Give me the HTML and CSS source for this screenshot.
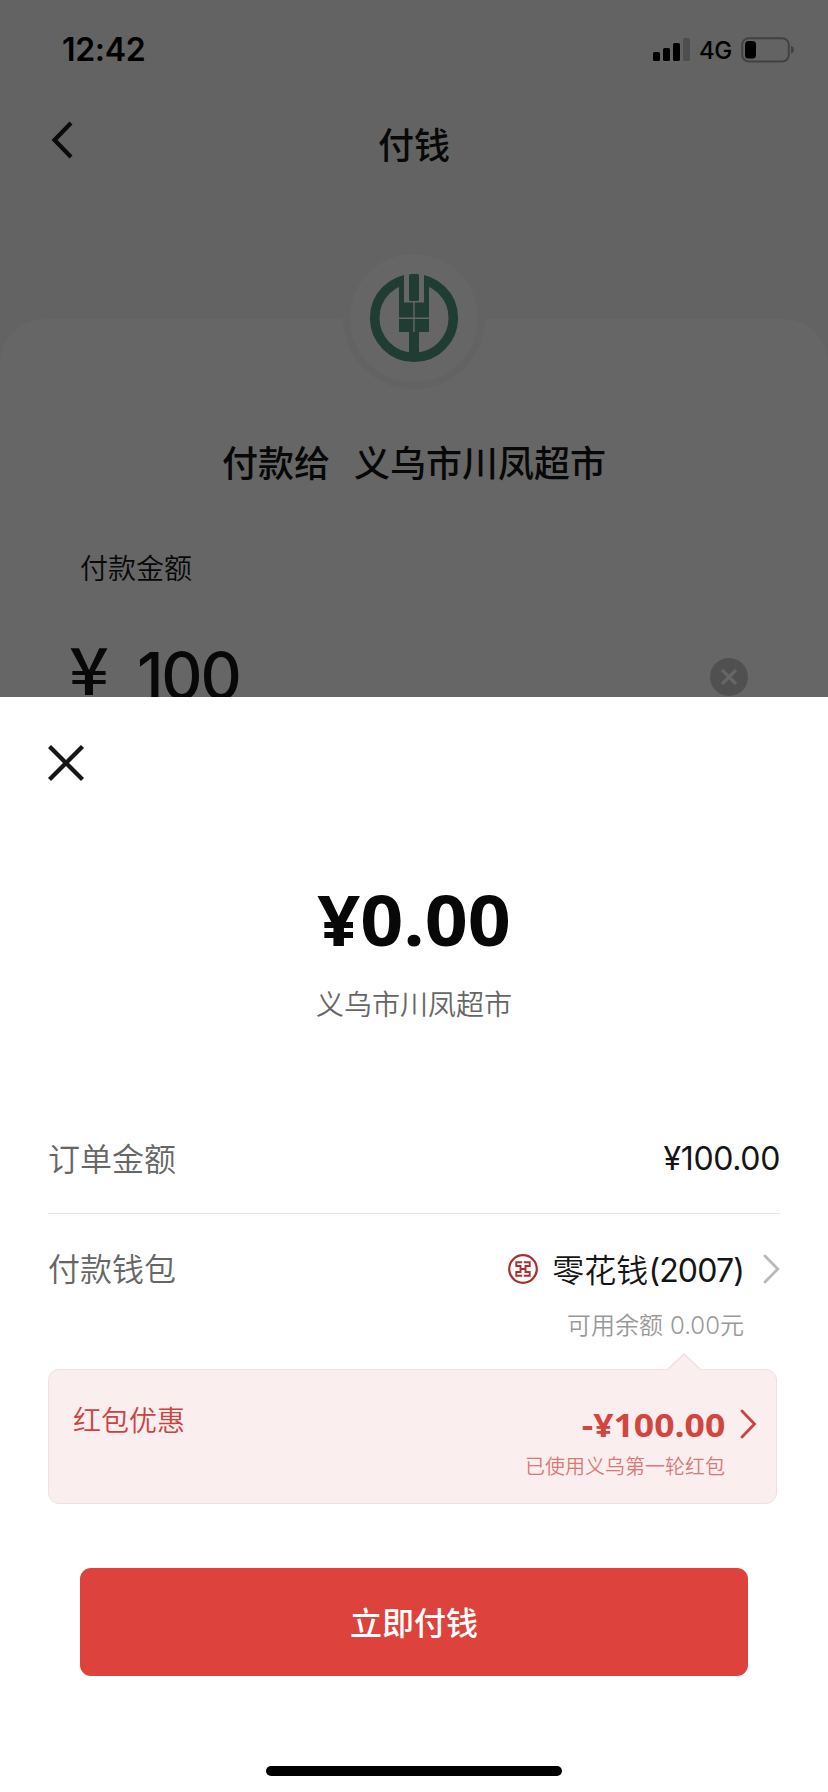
FILE: index.html
```html
<!DOCTYPE html>
<html lang="zh-CN">
<head>
<meta charset="utf-8">
<title>付钱</title>
<link rel="stylesheet" href="styles.css">
</head>
<body>
<div class="screen">
  <main class="page">
    <div class="status">
      <span class="time">12:42</span>
      <svg class="signal" width="38" height="24" viewBox="0 0 38 24">
        <rect x="0" y="14" width="7" height="9" rx="1.6"/>
        <rect x="10" y="10" width="7" height="13" rx="1.6"/>
        <rect x="20" y="5" width="7" height="18" rx="1.6"/>
        <rect x="30" y="0" width="7" height="23" rx="1.6" fill="#4e4e4e"/>
      </svg>
      <span class="net">4G</span>
      <svg class="battery" width="54" height="26" viewBox="0 0 54 26">
        <rect x="1.2" y="1.2" width="46.6" height="23.2" rx="6.5" fill="none" stroke="#424242" stroke-width="2"/>
        <rect x="4" y="4" width="11" height="17.6" rx="3.5"/>
        <path d="M50 8.8Q53 10 53 12.8Q53 15.600 50 16.800Z" fill="#424242"/>
      </svg>
    </div>
    <header class="nav">
      <svg class="back" width="24" height="38" viewBox="0 0 24 38"><path d="M20 2L3.500 19L20 36" fill="none" stroke="#0a0a0a" stroke-width="4.200"/></svg>
      <h1 class="title">付钱</h1>
    </header>
    <section class="card">
      <div class="logo">
        <svg width="90" height="90" viewBox="0 0 90 90">
          <circle cx="45" cy="45" r="39.300" fill="none" stroke="#213d33" stroke-width="9.600"/>
          <path d="M35 0H55V20H35Z" fill="#666"/>
          <path d="M30 5V59H40V84H50V59H60V5L55 2.200V29.500H35V2.200Z" fill="#213d33"/>
          <path d="M35 0H55V29H35Z" fill="#666"/>
          <rect x="40" y="1" width="10" height="27" rx="1.500" fill="#213d33"/>
          <path d="M45 29V59M30 45.300H60" stroke="#666" stroke-width="1.400"/>
        </svg>
      </div>
      <h2 class="payee"><span>付款给</span><span>义乌市川凤超市</span></h2>
      <p class="label">付款金额</p>
      <div class="amount">
        <span class="yen">¥</span><span class="digits">100</span>
        <svg class="clear" width="38" height="38" viewBox="0 0 38 38"><circle cx="19" cy="19" r="19" fill="#505050"/><path d="M12 12L26 26M26 12L12 26" stroke="#666" stroke-width="3.200"/></svg>
      </div>
    </section>
  </main>
  <section class="sheet">
    <svg class="close" width="38" height="38" viewBox="0 0 38 38"><path d="M1.500 1.500L34.500 34.500M34.500 1.500L1.500 34.500" stroke="#161616" stroke-width="4.300"/></svg>
    <div class="total">¥0.00</div>
    <div class="shop">义乌市川凤超市</div>
    <div class="row order"><span class="key">订单金额</span><span class="price">¥100.00</span></div>
    <div class="row wallet">
      <span class="key">付款钱包</span>
      <svg class="bank" width="30" height="30" viewBox="0 0 30 30" fill="none" stroke="#a9302f">
        <circle cx="15" cy="15" r="13.800" stroke-width="2.200"/>
        <path d="M14.200 8.300H8.300V12H12.500V18H8.300V21.700H14.200M15.800 8.300H21.700V12H17.500V18H21.700V21.700H15.800M12.500 15H17.500" stroke-width="1.900"/>
      </svg>
      <span class="name">零花钱<span class="tail">(2007)</span></span>
      <svg class="go" width="17" height="30" viewBox="0 0 17 30"><path d="M2 2L14.800 15L2 28" fill="none" stroke="#b9b9b9" stroke-width="2.800" stroke-linecap="round"/></svg>
    </div>
    <div class="balance">可用余额<span class="num">0.00</span>元</div>
    <div class="coupon">
      <svg class="tip" width="34" height="18" viewBox="0 0 34 18"><path d="M1 16L17 1L33 16V18H1Z" fill="#fbeeee"/><path d="M1 16L17 1L33 16" fill="none" stroke="#f1dfe1" stroke-width="1.500"/></svg>
      <span class="coupon-key">红包优惠</span>
      <div class="coupon-val">
        <strong class="off">-¥100.00</strong>
        <span class="used">已使用义乌第一轮红包</span>
      </div>
      <svg class="coupon-go" width="17" height="30" viewBox="0 0 17 30"><path d="M2 2L14.500 15L2 28" fill="none" stroke="#c9443f" stroke-width="2.800" stroke-linecap="round"/></svg>
    </div>
    <button class="pay">立即付钱</button>
    <div class="home"></div>
  </section>
</div>
</body>
</html>
```
FILE: styles.css
```css
* { box-sizing: border-box; margin: 0; padding: 0; }
body { width: 828px; height: 1792px; overflow: hidden; font-family: "Noto Sans CJK SC", sans-serif; }
.screen { display: flex; flex-direction: column; width: 828px; height: 1792px; background: #fff; }
.page { height: 697px; overflow: hidden; background: #636363; color: #080808; }
.status { display: flex; align-items: center; height: 100px; padding: 0 33px 0 62px; font-family: Inter, sans-serif; color: #000; }
.time { margin-right: auto; font-size: 32px; font-weight: 600; line-height: 40px; letter-spacing: -0.3px; }
.signal { margin-right: 8px; }
.net { width: 35px; margin-right: 7px; font-size: 24px; font-weight: 450; letter-spacing: -0.5px; }
.nav { display: flex; align-items: center; height: 90px; }
.back { margin: -10px 0 0 51px; }
.title { flex: 1; margin-top: -4px; padding-right: 75px; text-align: center; font-size: 36px; font-weight: 500; line-height: 54px; }
.card { display: flex; flex-direction: column; height: 378px; margin-top: 129px; padding: 0 80px; border-radius: 44px 44px 0 0; background: #666; }
.logo { display: flex; align-items: center; justify-content: center; align-self: center; flex: none; width: 142px; height: 142px; margin-top: -72px; border: 7px solid #636363; border-radius: 50%; background: #666; }
.payee { display: flex; justify-content: center; gap: 24px; margin-top: 45px; font-size: 36px; font-weight: 500; line-height: 54px; }
.label { margin-top: 58px; font-size: 28px; font-weight: 350; line-height: 42px; }
.amount { display: flex; align-items: flex-start; flex: none; height: 90px; margin: 36px 0 0 -11px; line-height: 90px; }
.yen { width: 67px; margin-top: -2px; font-size: 65px; font-weight: 500; transform: scaleX(1.08); transform-origin: 0 50%; }
.digits { margin: 7px auto 0 1px; font-family: Inter, sans-serif; font-size: 64px; font-weight: 500; letter-spacing: -2.200px; }
.clear { margin-top: 34px; }
.sheet { display: flex; flex-direction: column; height: 1095px; padding: 0 48px; }
.close { margin: 48px 0 0; }
.total { height: 90px; margin-top: 91px; text-align: center; font-family: "Open Sans", "Noto Sans", sans-serif; font-size: 70px; font-weight: 750; line-height: 90px; color: #080808; transform: scaleX(1.075); }
.shop { margin-top: 18px; text-align: center; font-size: 28px; font-weight: 350; line-height: 42px; color: #666; }
.row { display: flex; align-items: center; font-size: 32px; line-height: 48px; color: #151515; }
.key { margin: -4px auto 0 0; font-weight: 350; color: #666; }
.order { height: 110px; margin-top: 80px; border-bottom: 1px solid #e4e4e4; }
.price, .tail { font-family: Inter, sans-serif; letter-spacing: -0.350px; }
.wallet { height: 110px; }
.bank { margin-right: 14px; }
.go { margin-left: 19px; }
.name { font-weight: 350; }
.tail { font-weight: 400; letter-spacing: -0.850px; }
.balance { margin: -18px 36px 0 0; text-align: right; font-size: 24px; font-weight: 350; line-height: 36px; color: #999; }
.num { margin-left: 7px; font-family: Inter, sans-serif; }
.coupon { position: relative; display: flex; height: 135px; margin: 25px 3px 0 0; padding: 0 19px 0 24px; border: 1.500px solid #f1dfe1; border-radius: 11px; background: #fbeeee; }
.tip { position: absolute; top: -17px; right: 75px; }
.coupon-key { margin: 28px auto 0 0; font-size: 28px; font-weight: 350; line-height: 42px; color: #c9443f; }
.coupon-val { display: flex; flex-direction: column; align-items: flex-end; }
.off { margin-top: 35px; font-family: "Open Sans", "Noto Sans", sans-serif; font-size: 32px; font-weight: 750; line-height: 40px; color: #d14740; transform: scaleX(1.11); transform-origin: 100% 50%; }
.used { margin-top: 6px; font-size: 20px; font-weight: 350; line-height: 30px; color: #d77a77; }
.coupon-go { margin: 39px 0 0 15px; }
.pay { width: 668px; height: 108px; margin: 64px 0 0 32px; padding-bottom: 3px; border: 0; border-radius: 11px; background: #dd433c; color: #fff; font-family: "Noto Sans CJK SC", sans-serif; font-size: 32px; font-weight: 500; line-height: 48px; }
.home { width: 296px; height: 10px; margin: 90px auto 0; border-radius: 5px; background: #000; }
```
